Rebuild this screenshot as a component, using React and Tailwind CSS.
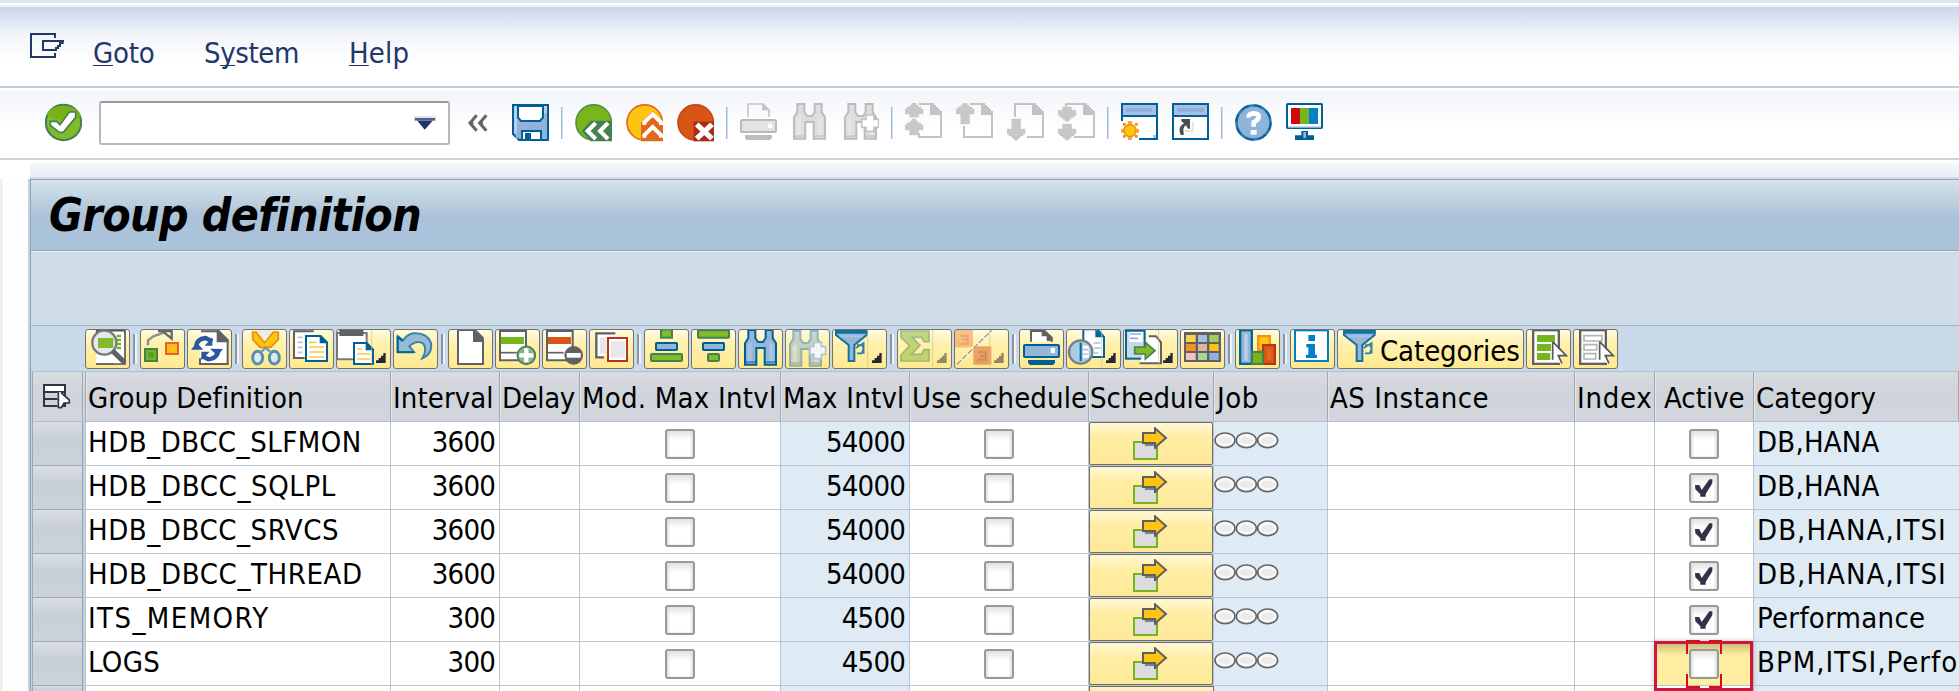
import React from "react";

const font = "font-['DejaVu_Sans_Condensed','DejaVu_Sans',sans-serif] [font-stretch:condensed]";

/* Icon artwork is drawn at three units per pixel. */
function Art({ x, y, w, h, children, className = "" }) {
  return (
    <svg
      className={`block shrink-0 ${className}`}
      width={w / 3}
      height={h / 3}
      viewBox={`${x} ${y} ${w} ${h}`}
      fill="none"
    >
      {children}
    </svg>
  );
}

function R({ x, y, w, h, f, s, sw = 6, ...rest }) {
  return s ? (
    <rect x={x + sw / 2} y={y + sw / 2} width={w - sw} height={h - sw} fill={f || "none"} stroke={s} strokeWidth={sw} {...rest} />
  ) : (
    <rect x={x} y={y} width={w} height={h} fill={f} {...rest} />
  );
}

/* ---------- main toolbar ---------- */

function Tool({ x, children }) {
  return (
    <Art x={x} y={69} w={111} h={117} className="mx-[7px]">
      {children}
    </Art>
  );
}

function Divider() {
  return <div className="mx-[5px] h-8 w-0.5 shrink-0 border-r border-[#cfdcec] bg-[#9dbcdc]" />;
}

function Binoculars({ x, y, fill, light, stroke }) {
  return (
    <g transform={`translate(${x} ${y})`}>
      <path d="M13 3H34V27L42 39H57L65 27V3H86V27L96 43V107H62V57H37V107H3V43L13 27Z" fill={fill} stroke={stroke} strokeWidth="6" />
      <path d="M14 48V98M20 40V98M79 40V98M85 48V98" stroke={light} strokeWidth="6" />
      <path d="M3 99H37M62 99H96" stroke={stroke} strokeWidth="3" />
    </g>
  );
}

function Page({ x, cut }) {
  return (
    <g>
      <path d={cut} stroke="#c3c3c3" strokeWidth="6" />
      <path d={`M${x + 75} 69H${x + 87}V75H${x + 93}V81H${x + 99}V87H${x + 105}V93H${x + 111}V105H${x + 75}Z`} fill="#c3c3c3" />
    </g>
  );
}

/* Block arrow pointing up, 54 units wide, stem running down to `h`. */
function Arrow({ x, y, h, down }) {
  const d = `M21 0H33V6H39V12H48V18H54V33H41V${h}H14V33H0V18H6V12H15V6H21Z`;
  return (
    <path
      d={d}
      fill="#c8c8c8"
      stroke="#bfbfbf"
      strokeWidth="1"
      transform={down ? `translate(${x} ${y + h}) scale(1 -1)` : `translate(${x} ${y})`}
    />
  );
}

function MainToolbar() {
  return (
    <div className="flex items-center pl-[38px]">
      <Art x={135} y={309} w={111} h={117} className="mx-[7px]">
        <circle cx="190.500" cy="367.500" r="53" fill="#80bb2a" stroke="#438052" strokeWidth="6" />
        <path d="M140 345Q190 375 242 350Q240 322 190 317Q150 318 140 345Z" fill="#76b219" />
        <path d="M151 364H170L180 374L208 336H227V352L190 397H178L151 376Z" fill="#fff" stroke="#438052" strokeWidth="5" />
      </Art>
      <div className="mt-[10px] ml-[10px] flex h-11 w-[351px] items-center justify-end self-start rounded-[3px] border-2 border-[#b5b7ba] border-t-[#96989d] bg-white pr-3">
        <Art x={1242} y={345} w={66} h={42}>
          <path d="M1242 345H1308V351H1242Z" fill="#e3e4e8" />
          <path d="M1244 351H1306V359H1244Z" fill="#50658e" />
          <path d="M1252 359H1298L1274 386Z" fill="#203569" />
        </Art>
      </div>
      <Art x={85} y={102} w={63} h={54} className="mr-4 ml-[18px]">
        <path d="M111 106L91 129L111 152M140 106L120 129L140 152" stroke="#666" strokeWidth="9" />
        <path d="M88 129H101M117 129H130" stroke="#666" strokeWidth="7" />
      </Art>
      <Tool x={216}>
        <path d="M219 75H324V180H237L219 162Z" fill="#94b2d9" stroke="#005f96" strokeWidth="6" />
        <path d="M222 78H231V160H222ZM312 78H321V100H312Z" fill="#bdd0e8" />
        <path d="M234 78H309V112L300 123H243L234 112Z" fill="#fff" stroke="#005f96" strokeWidth="6" />
        <R x={243} y={150} w={63} h={33} f="#fff" s="#005f96" />
        <R x={255} y={159} w={18} h={24} f="#005f96" />
        <path d="M230 177V165" stroke="#9dbce0" strokeWidth="5" />
      </Tool>
      <Divider />
      <Tool x={405}>
        <circle cx="461" cy="127.500" r="53" fill="#79b51d" stroke="#568f45" strokeWidth="5" />
        <path d="M425 153L452 122H516V184H452Z" fill="#438052" />
        <path d="M467 129L443 153L467 177M504 129L480 153L504 177" stroke="#fff" strokeWidth="12" />
      </Tool>
      <Tool x={558}>
        <circle cx="614" cy="127.500" r="53" fill="#fdc412" stroke="#e2691c" strokeWidth="5" />
        <path d="M603 128L638 93L669 128V184H603Z" fill="#e2691c" />
        <path d="M613 135V127L638 103L663 127V135M613 173V165L638 141L663 165V173" stroke="#fff" strokeWidth="12" />
      </Tool>
      <Tool x={711}>
        <circle cx="767" cy="127.500" r="53" fill="#d85615" stroke="#c64419" strokeWidth="5" />
        <path d="M761 125H822V184H761Z" fill="#aa2c14" />
        <path d="M770 133L816 176M816 133L770 176" stroke="#fff" strokeWidth="16" />
      </Tool>
      <Divider />
      <Tool x={900}>
        <path d="M924 110V72H969L987 90V110" stroke="#c3c3c3" strokeWidth="5" />
        <path d="M966 69L988 91H966Z" fill="#c3c3c3" />
        <R x={900} y={117} w={111} h={42} f="#e3e3e3" s="#b9b9b9" rx="3" />
        <R x={984} y={132} w={12} h={12} f="#fff" />
        <path d="M915 165H996V174L990 180H920L915 174Z" fill="#bdbdbd" />
      </Tool>
      <Tool x={1053}>
        <Binoculars x={1059} y={69} fill="#dedede" light="#e6e6e6" stroke="#bcbcbc" />
      </Tool>
      <Tool x={1206}>
        <Binoculars x={1212} y={69} fill="#dedede" light="#e6e6e6" stroke="#bcbcbc" />
        <path d="M1278 105H1302V118H1316V142H1302V154H1278V142H1265V118H1278Z" fill="#fff" stroke="#c2c2c2" strokeWidth="5" />
      </Tool>
      <Divider />
      <Tool x={75}>
        <Page x={75} cut="M117 72H153M183 96V171H117V160" />
        <Arrow x={75} y={69} h={43} />
        <Arrow x={75} y={117} h={48} />
      </Tool>
      <Tool x={228}>
        <Page x={228} cut="M270 72H306M336 96V171H252V138" />
        <Arrow x={228} y={69} h={63} />
      </Tool>
      <Tool x={381}>
        <Page x={381} cut="M405 111V72H459M489 96V171H441" />
        <Arrow x={381} y={117} h={63} down />
      </Tool>
      <Tool x={534}>
        <Page x={534} cut="M558 81V72H612M642 96V171H582" />
        <Arrow x={534} y={81} h={43} down />
        <Arrow x={534} y={132} h={48} down />
      </Tool>
      <Divider />
      <Tool x={723}>
        <path d="M726 123V72H831V177H777" fill="#fff" stroke="#005f96" strokeWidth="6" />
        <path d="M723 123H777V180H723Z" fill="#fff" />
        <R x={729} y={75} w={99} h={30} f="#a5c0e2" />
        <R x={738} y={84} w={78} h={12} f="#8fb1d9" />
        <R x={726} y={105} w={105} h={6} f="#005f96" />
        <path d="M819 174V165H828V174Z" fill="#a5c0e2" />
        <path d="M744 123H756V180H744ZM723 146H777V158H723Z" fill="#f7a54a" />
        <path d="M729 129h8v8h-8zM765 129h8v8h-8zM729 165h8v8h-8zM765 165h8v8h-8z" fill="#ef8a0c" />
        <circle cx="750" cy="152" r="18" fill="#fdc412" stroke="#f29410" strokeWidth="5" />
      </Tool>
      <Tool x={876}>
        <R x={876} y={69} w={111} h={111} f="#fff" s="#005f96" />
        <R x={882} y={75} w={99} h={30} f="#a5c0e2" />
        <R x={891} y={84} w={81} h={12} f="#8fb1d9" />
        <R x={879} y={105} w={105} h={6} f="#005f96" />
        <path d="M938 125V153H914" stroke="#e4e4e4" strokeWidth="6" />
        <path d="M904 117H930V146H924L918 136Q907 143 911 158V165H902Q891 143 912 130L904 124Z" fill="#4c4c50" />
      </Tool>
      <Divider />
      <Tool x={1065}>
        <circle cx="1120.500" cy="127.500" r="51" fill="#8fb4d9" stroke="#2e7cab" strokeWidth="8" />
        <circle cx="1120.500" cy="127.500" r="52" stroke="#005f96" strokeWidth="5" strokeDasharray="24 17" />
        <path d="M1106 113Q1104 101 1121 100Q1138 100 1136 112Q1134 121 1121 127V140" stroke="#fff" strokeWidth="14" />
        <R x={1112} y={150} w={18} h={14} f="#fff" />
      </Tool>
      <Tool x={1218}>
        <R x={1218} y={69} w={111} h={78} f="#fff" s="#005f96" rx="2" />
        <R x={1224} y={138} w={99} h={5} f="#c8d8e8" />
        <R x={1233} y={84} w={27} h={48} f="#cf0a0a" />
        <R x={1260} y={84} w={27} h={48} f="#76b51d" />
        <R x={1287} y={84} w={27} h={48} f="#0080c6" />
        <path d="M1264 153H1284V166H1302V180H1245V166H1264Z" fill="#005f96" />
        <R x={1270} y={156} w={8} h={18} f="#8fb4d9" />
      </Tool>
    </div>
  );
}

/* ---------- grid toolbar ---------- */

const btn =
  "flex h-10 shrink-0 items-center rounded-[3px] border border-[#73726b] bg-linear-to-b from-[#fffbe0] via-[#fff1ae] via-35% to-[#ffe98f]";

function Btn({ x, y = 42, menu, faded, children }) {
  const w = menu ? 165 : 135;
  return (
    <button className={btn}>
      <Art x={x + 3} y={y + 3} w={w - 6} h={114}>
        <g opacity={faded ? 0.5 : 1}>
          {children}
          {menu && <path d={`M${x + 149} ${y + 72}V${y + 102}H${x + 120}V${y + 94}H${x + 128}V${y + 87}H${x + 135}V${y + 80}H${x + 142}V${y + 72}Z`} fill="#26263a" />}
        </g>
        {menu && <path d={`M${x + 107} ${y + 3}V${y + 114}`} stroke="#cfc28b" strokeWidth="2" />}
      </Art>
    </button>
  );
}

function Bar() {
  return <div className="mx-px mt-[5px] h-[30px] w-1 shrink-0 border-x-2 border-l-[#8d959d] border-r-[#eef3f8]" />;
}

function Funnel({ x }) {
  return (
    <g transform={`translate(${x} 0)`}>
      <path d="M3 48H95V60L58 90V138H41V90L3 60Z" fill="#94b6d9" stroke="#14709f" strokeWidth="6" />
      <path d="M0 46H98V56H0Z" fill="#14709f" />
      <path d="M14 64H84" stroke="#a9c4e2" strokeWidth="6" />
      <path d="M62 99L86 84V116M66 90H80L86 100L80 115H66" stroke="#2e80ae" strokeWidth="5" />
    </g>
  );
}

function Cursor({ x, y }) {
  return (
    <g>
      <path d={`M${x} ${y}L${x + 42} ${y + 43}H${x + 24}L${x + 32} ${y + 63}H${x + 20}L${x + 12} ${y + 48}L${x} ${y + 60}Z`} fill="#fff" />
      <path d={`M${x + 4} ${y}V${y + 54}M${x + 4} ${y}L${x + 45} ${y + 42}H${x + 21}L${x + 32} ${y + 65}`} stroke="#55565a" strokeWidth="5" />
    </g>
  );
}

function Sheet({ x, y, w, h }) {
  return (
    <g>
      <path d={`M${x + 3} ${y + 3}H${x + w - 22}L${x + w - 3} ${y + 22}V${y + h - 3}H${x + 3}Z`} fill="#fff" stroke="#005f96" strokeWidth="6" />
      <path d={`M${x + w - 25} ${y}L${x + w} ${y + 25}H${x + w - 25}Z`} fill="#005f96" />
    </g>
  );
}

function GridToolbar() {
  return (
    <div className="flex h-[46px] shrink-0 items-start gap-0.5 border-b border-[#aebfce] bg-[#c9d9e9] pt-[3px] pl-[54px]">
      <Btn x={255} y={57}>
        <path d="M290 120V62H375V162H290" fill="#fff" stroke="#55565a" strokeWidth="5" />
        <path d="M350 78H363M350 90H363M350 102H363M350 114H363" stroke="#76b51d" strokeWidth="7" />
        <R x={288} y={145} w={54} h={18} f="#fff" />
        <path d="M288 162H342" stroke="#55565a" strokeWidth="5" />
        <circle cx="313" cy="98" r="36" fill="#e3e8ec" stroke="#77797d" strokeWidth="7" />
        <R x={294} y={84} w={46} h={30} f="#80bb2a" />
        <path d="M337 122L374 158" stroke="#606164" strokeWidth="15" />
      </Btn>
      <Bar />
      <Btn x={420} y={57}>
        <path d="M444 106V91L460 79L477 73L494 66" stroke="#8b8c90" strokeWidth="7" />
        <path d="M474 63H515V86L488 64" stroke="#66676b" strokeWidth="7" />
        <R x={432} y={114} w={42} h={42} f="#76b51d" s="#438052" />
        <R x={445} y={127} w={16} h={16} f="#559e20" />
        <R x={495} y={96} w={42} h={39} f="#f9b233" s="#e2691c" />
        <R x={507} y={108} w={18} h={16} f="#fdc412" />
      </Btn>
      <Btn x={561} y={57}>
        <path d="M603 64H654L683 92V162H600V145" fill="#fff" stroke="#606164" strokeWidth="6" />
        <path d="M650 61H658L685 88V97H650Z" fill="#606164" />
        <path d="M588 110Q590 87 617 84L637 94M655 124Q650 146 625 148L606 138" stroke="#2b579d" strokeWidth="13" />
        <path d="M573 119L590 98L610 119ZM630 116L669 117L652 137ZM637 82V107H614ZM604 125H629L604 151Z" fill="#2b579d" />
      </Btn>
      <Bar />
      <Btn x={726} y={57}>
        <path d="M758 66H769L793 98L820 66H835V88L812 112H780L758 88Z" fill="#fdc412" stroke="#ef8a0c" strokeWidth="5" />
        <path d="M773 60H817L797 92H792Z" fill="#ececea" />
        <ellipse cx="773" cy="143" rx="15" ry="19" fill="#dfe9ee" stroke="#5590b2" strokeWidth="9" />
        <ellipse cx="823" cy="143" rx="15" ry="19" fill="#dfe9ee" stroke="#5590b2" strokeWidth="9" />
        <path d="M785 125L796 113L810 125" stroke="#6b9bb8" strokeWidth="7" />
      </Btn>
      <Btn x={867} y={57}>
        <path d="M941 64H882V144H914" fill="#fff" stroke="#606164" strokeWidth="6" />
        <path d="M893 82H908M893 97H908M893 112H908M893 127H908" stroke="#c4c4c4" strokeWidth="5" />
        <Sheet x={915} y={75} w={69} h={81} />
        <path d="M927 97H950M927 111H973M927 126H973M927 141H973" stroke="#fcc93f" strokeWidth="5" />
      </Btn>
      <Btn x={1008} y={57} menu>
        <path d="M1011 69H1100V148H1011Z" fill="#fff" stroke="#77797d" strokeWidth="6" />
        <path d="M1018 60H1090V78H1018Z" fill="#606164" />
        <Sheet x={1059} y={96} w={63} h={69} />
        <path d="M1071 117H1087M1071 132H1111M1071 147H1111" stroke="#fcc93f" strokeWidth="5" />
      </Btn>
      <Btn x={1179} y={57}>
        <path d="M1193 78V126H1242L1228 109Q1250 88 1270 101Q1283 119 1267 145Q1298 132 1293 98Q1280 67 1240 70Q1220 74 1210 91Z" fill="#98bbd4" stroke="#3c83b0" strokeWidth="6" />
        <path d="M1193 78V127H1243M1193 80L1208 94" stroke="#00679c" strokeWidth="6" />
      </Btn>
      <Bar />
      <Btn x={54}>
        <path d="M84 45H132L159 73V147H84Z" fill="#fff" stroke="#606164" strokeWidth="6" />
        <path d="M129 43H137L161 67V81H129Z" fill="#606164" />
      </Btn>
      <Btn x={195}>
        <path d="M210 48H288V136H210Z" fill="#fff" stroke="#606164" strokeWidth="6" />
        <R x={212} y={66} w={70} h={21} f="#76b51d" />
        <path d="M210 113H260" stroke="#606164" strokeWidth="5" />
        <circle cx="289" cy="121" r="27" fill="#8bb096" stroke="#438052" strokeWidth="5" />
        <path d="M289 100V142M268 121H310" stroke="#fff" strokeWidth="13" />
      </Btn>
      <Btn x={336}>
        <path d="M351 48H428V136H351Z" fill="#fff" stroke="#606164" strokeWidth="6" />
        <R x={354} y={66} w={69} h={21} f="#d85615" />
        <path d="M351 113H401" stroke="#606164" strokeWidth="5" />
        <circle cx="431" cy="121" r="28" fill="#606164" />
        <R x={410} y={114} w={42} h={14} f="#fff" />
      </Btn>
      <Btn x={477}>
        <path d="M556 55H499V127H522" fill="#fff" stroke="#606164" strokeWidth="7" />
        <R x={509} y={67} w={21} h={49} f="#e6e6e6" />
        <R x={531} y={66} w={63} h={75} f="#fff" s="#b33520" />
        <R x={543} y={78} w={42} h={50} f="#e8e8ea" />
      </Btn>
      <Bar />
      <Btn x={642}>
        <R x={690} y={40} w={39} h={31} f="#80bb2a" s="#438052" />
        <R x={675} y={81} w={69} h={27} f="#94b6d9" s="#005f96" rx="2" />
        <R x={660} y={114} w={99} h={27} f="#80bb2a" s="#438052" rx="3" />
      </Btn>
      <Btn x={783}>
        <R x={801} y={43} w={99} h={28} f="#80bb2a" s="#438052" rx="2" />
        <R x={816} y={81} w={69} h={27} f="#94b6d9" s="#005f96" rx="2" />
        <R x={831} y={114} w={39} h={27} f="#80bb2a" s="#438052" rx="3" />
      </Btn>
      <Btn x={924}>
        <Binoculars x={942} y={42} fill="#94b6d9" light="#a9c4e2" stroke="#005f96" />
      </Btn>
      <Btn x={1065}>
        <g opacity="0.55">
          <Binoculars x={1077} y={45} fill="#94b6d9" light="#bdd3e8" stroke="#3680ab" />
        </g>
        <path d="M1152 82H1174V95H1187V118H1174V131H1152V118H1140V95H1152Z" fill="#f4f6fa" stroke="#b5c3d6" strokeWidth="5" />
      </Btn>
      <Btn x={1206} menu>
        <Funnel x={1215} />
      </Btn>
      <Bar />
      <Btn x={51} menu faded>
        <path d="M63 48H147V80H132L124 67H96L120 91L94 118H124L132 104H147V138H63V120L89 92L63 67Z" fill="#84b93c" stroke="#438052" strokeWidth="5" />
      </Btn>
      <Btn x={222} menu faded>
        <R x={225} y={45} w={54} h={52} f="#f5893a" />
        <path d="M241 63H263V86H238M247 73H262" stroke="#d8552a" strokeWidth="6" />
        <path d="M231 148L335 46" stroke="#fff" strokeWidth="12" />
        <path d="M231 148L335 46" stroke="#606164" strokeWidth="5" strokeDasharray="18 5" />
        <R x={280} y={94} w={54} h={55} f="#d75722" />
        <path d="M295 112H317V134H292M300 123H317" stroke="#a9281c" strokeWidth="6" />
      </Btn>
      <Bar />
      <Btn x={417}>
        <path d="M453 80V48H494L515 68V80" fill="#fff" stroke="#606164" strokeWidth="6" />
        <path d="M485 45L517 67V78H500V64H485Z" fill="#606164" />
        <R x={429} y={87} w={111} h={42} f="#94b6d9" s="#005f96" rx="3" />
        <R x={512} y={99} w={13} h={15} f="#fff" />
        <path d="M444 135H525V144L519 150H450L444 144Z" fill="#005f96" />
      </Btn>
      <Btn x={558} menu>
        <path d="M610 43H652L672 66V126H610Z" fill="#fff" stroke="#00679c" strokeWidth="6" />
        <path d="M646 43L674 67H646Z" fill="#00679c" />
        <path d="M641 84H662M641 99H662M641 114H655" stroke="#a9c4e2" strokeWidth="5" />
        <circle cx="602" cy="111" r="35" fill="#a9cce5" stroke="#7b7d82" strokeWidth="7" />
        <path d="M602 83V138" stroke="#00679c" strokeWidth="6" />
        <path d="M609 92H626V129H609Z" fill="#fff" />
        <path d="M609 104H624M609 117H624" stroke="#a9c4e2" strokeWidth="5" />
      </Btn>
      <Btn x={729} menu>
        <R x={735} y={44} w={62} h={90} f="#c8daec" s="#00679c" />
        <R x={748} y={51} w={40} h={30} f="#fff" />
        <path d="M750 57H783M750 70H775" stroke="#8fb1d9" strokeWidth="5" />
        <path d="M806 64H828L843 82V145H779" fill="#fff" stroke="#606164" strokeWidth="6" />
        <R x={800} y={70} w={30} h={70} f="#fff" />
        <path d="M764 96H796V82L825 107L796 132V117H764Z" fill="#80bb2a" stroke="#438052" strokeWidth="5" />
      </Btn>
      <Btn x={900}>
        <R x={912} y={51} w={111} h={90} f="#606164" />
        <R x={918} y={60} w={29} h={21} f="#fcd351" /><R x={954} y={60} w={27} h={21} f="#a3bfdc" /><R x={988} y={60} w={28} h={21} f="#a2cc5e" />
        <R x={918} y={87} w={29} h={21} f="#f7921c" /><R x={954} y={87} w={27} h={21} f="#d9b3a3" /><R x={988} y={87} w={28} h={21} f="#fdc412" />
        <R x={918} y={114} w={29} h={21} f="#f8c0c0" /><R x={954} y={114} w={27} h={21} f="#a9d696" /><R x={988} y={114} w={28} h={21} f="#8fb4d9" />
      </Btn>
      <Bar />
      <Btn x={1065}>
        <R x={1077} y={42} w={42} h={108} f="#94b6d9" s="#00679c" sw={7} />
        <R x={1093} y={57} w={10} h={80} f="#bdd0e8" />
        <R x={1131} y={60} w={42} h={50} f="#fdc412" s="#f29410" sw={7} />
        <R x={1146} y={87} w={42} h={63} f="#d85615" s="#b33520" />
        <R x={1161} y={102} w={13} h={34} f="#e2691c" />
        <R x={1113} y={108} w={39} h={42} f="#76b51d" s="#438052" />
      </Btn>
      <Bar />
      <Btn x={210}>
        <R x={222} y={43} w={105} h={98} f="#fff" s="#0080c6" />
        <path d="M265 60H285V78H265ZM259 87H285V119H291V129H258V119H265V97H259Z" fill="#0080c6" />
      </Btn>
      <button className={`${btn} w-[187px]`}>
        <Art x={354} y={45} w={126} h={114}>
          <Funnel x={369} />
        </Art>
        <span className="mt-1 text-[29px] tracking-[-0.1px] text-black">Categories</span>
      </button>
      <Btn x={918}>
        <R x={936} y={42} w={84} h={108} f="#fff" s="#606164" sw={7} />
        <R x={951} y={60} w={54} h={21} f="#76b51d" /><R x={951} y={87} w={42} h={21} f="#76b51d" /><R x={951} y={114} w={40} h={21} f="#76b51d" />
        <Cursor x={994} y={80} />
      </Btn>
      <Btn x={1059}>
        <R x={1077} y={42} w={84} h={108} f="#fff" s="#606164" sw={7} />
        <path d="M1092 62H1146V78H1092ZM1092 89H1130V105H1092ZM1092 116H1127V132H1092Z" stroke="#b4b4b4" strokeWidth="5" />
        <Cursor x={1135} y={80} />
      </Btn>
    </div>
  );
}

/* ---------- table ---------- */

const cols =
  "grid grid-cols-[53px_306px_109px_80px_201px_129px_179px_125px_114px_247px_80px_99px_205px]";

const rows = [
  { name: "HDB_DBCC_SLFMON", nameCls: "tracking-[0.5px]", interval: "3600", max: "54000", active: false, cat: "DB,HANA", catCls: "tracking-[0.2px]" },
  { name: "HDB_DBCC_SQLPL", nameCls: "tracking-[0.6px]", interval: "3600", max: "54000", active: true, cat: "DB,HANA", catCls: "tracking-[0.2px]" },
  { name: "HDB_DBCC_SRVCS", nameCls: "tracking-[0.55px]", interval: "3600", max: "54000", active: true, cat: "DB,HANA,ITSI", catCls: "tracking-[1.05px]" },
  { name: "HDB_DBCC_THREAD", nameCls: "tracking-[0.6px]", interval: "3600", max: "54000", active: true, cat: "DB,HANA,ITSI", catCls: "tracking-[1.05px]" },
  { name: "ITS_MEMORY", nameCls: "tracking-[1.4px]", interval: "300", max: "4500", active: true, cat: "Performance", catCls: "tracking-[0.3px]" },
  { name: "LOGS", nameCls: "tracking-[0.3px]", interval: "300", max: "4500", active: false, cat: "BPM,ITSI,Perfo", catCls: "tracking-[1px]" },
];

const heads = [
  ["Group Definition", "pl-[2px] tracking-[0.1px]"],
  ["Interval", "pl-[2px] tracking-[0.1px]"],
  ["Delay", "pl-[2px] tracking-[-0.4px]"],
  ["Mod. Max Intvl", "pl-[2px] tracking-[0.25px]"],
  ["Max Intvl", "pl-[2px] tracking-[0.25px]"],
  ["Use schedule", "pl-[2px] tracking-[0.1px]"],
  ["Schedule", "pl-px tracking-[0px]"],
  ["Job", "pl-[3px] tracking-[0.5px]"],
  ["AS Instance", "pl-[2px] tracking-[0.5px]"],
  ["Index", "pl-[2px] tracking-[0.7px]"],
  ["Active", "pl-[9px] tracking-[0px]"],
  ["Category", "pl-[2px] tracking-[0.1px]"],
];

const cell = "flex h-full items-center border-r border-[#b9c5d3] overflow-hidden whitespace-nowrap";

function Check({ on, className = "" }) {
  return (
    <div className={`flex size-[30px] shrink-0 items-center justify-center rounded-[3px] border-2 border-[#97999b] bg-linear-to-b from-[#e2e2e4] via-white via-35% to-white shadow-[inset_2px_0_2px_#e2e2e4,inset_-2px_0_2px_#e2e2e4] ${className}`}>
      {on && (
        <Art x={405} y={324} w={54} h={60}>
          <path d="M405 345H418L425 360L448 328H457V340L437 372V380H421V373L406 358Z" fill="#32324a" />
        </Art>
      )}
    </div>
  );
}

function ScheduleIcon() {
  return (
    <Art x={759} y={336} w={105} h={99} className="-ml-[1px]">
      <R x={759} y={378} w={75} h={57} f="#dcdcde" s="#76b51d" />
      <path d="M795 378H834V402H822V393H795Z" fill="#7a828a" />
      <path d="M789 354H825V340L858 369L825 397V384H789Z" fill="#fdc412" stroke="#5e5f63" strokeWidth="6" />
    </Art>
  );
}

function Chain() {
  return (
    <Art x={1002} y={350} w={195} h={50}>
      {[1035, 1099, 1163].map((cx) => (
        <g key={cx}>
          <ellipse cx={cx} cy="375" rx="30" ry="22" fill="#f8f8f8" stroke="#66676b" strokeWidth="5" />
          <ellipse cx={cx} cy="375" rx="20" ry="11" fill="#ebebeb" />
        </g>
      ))}
    </Art>
  );
}

function RowHandle({ className = "" }) {
  return (
    <div className={`mr-[2px] h-full border border-t-0 border-[#9ba9b7] border-r-[#93a2b1] bg-linear-to-b from-[#dadfe5] via-[#c9cfd7] via-40% to-[#ccd2da] ${className}`} />
  );
}

function ScheduleCell() {
  return (
    <div className="flex h-full items-stretch border-r border-[#b9c5d3] bg-[#b9c5d3]">
      <div className="flex flex-1 items-center justify-center rounded-[2px] border border-[#6f6e66] bg-linear-to-b from-[#fff8d5] via-[#ffeda3] via-35% to-[#ffe99a]">
        <ScheduleIcon />
      </div>
    </div>
  );
}

function Row({ r, focus }) {
  return (
    <div className={`${cols} h-11 border-b border-[#b9c5d3]`}>
      <div className="-mb-px"><RowHandle className="border-b" /></div>
      <div className={`${cell} border-l bg-white pl-[2px]`}>
        <span className={`-mt-[3px] ${r.nameCls}`}>{r.name}</span>
      </div>
      <div className={`${cell} justify-end bg-white pr-[4px]`}><span className="-mt-[3px] tracking-[-0.8px]">{r.interval}</span></div>
      <div className={`${cell} bg-white`} />
      <div className={`${cell} justify-center bg-white`}><Check /></div>
      <div className={`${cell} justify-end bg-[#deeaf4] pr-[4px]`}><span className="-mt-[3px] tracking-[-0.8px]">{r.max}</span></div>
      <div className={`${cell} justify-center bg-white`}><Check /></div>
      <ScheduleCell />
      <div className={`${cell} items-start bg-[#deeaf4] pt-[10px]`}><Chain /></div>
      <div className={`${cell} bg-white`} />
      <div className={`${cell} bg-white`} />
      {focus ? (
        <div className="relative flex h-full items-center justify-center border-r border-[#b9c5d3] bg-linear-to-b from-[#c3b777] to-[#ffee9f] to-30%">
          <div className="absolute -top-px -left-px h-[50px] w-[99px] border-[3px] border-[#d2143a] shadow-[0_0_5px_#88888880]" />
          <Check />
          <svg className="absolute -top-[2px] left-[31px]" width="37" height="49" viewBox="0 0 37 49" fill="none" stroke="#d90d18" strokeWidth="2">
            <path d="M14 1H1V14M23 1H35V14M1 34V47H14M35 34V47H23" />
          </svg>
        </div>
      ) : (
        <div className={`${cell} justify-center bg-white`}><Check on={r.active} /></div>
      )}
      <div className="flex h-full items-center overflow-hidden bg-[#deeaf4] pl-[3px] whitespace-nowrap">
        <span className={`-mt-[3px] ${r.catCls}`}>{r.cat}</span>
      </div>
    </div>
  );
}

function Table() {
  return (
    <div className="w-full overflow-hidden pl-px">
      <div className={`${cols} h-[50px] border-b border-[#b3bfcc] bg-linear-to-b from-[#d9dde2] via-[#cfd3da] via-45% to-[#d2d6dc]`}>
        <div className="mr-[2px] flex items-center border-x border-[#9ba9b7] pl-[10px]">
          <Art x={129} y={222} w={84} h={75}>
            <R x={129} y={222} w={69} h={69} f="#cfd3da" s="#32324a" />
            <path d="M135 228H192V243H135Z" fill="#fff" />
            <path d="M129 246H198M129 267H175" stroke="#32324a" strokeWidth="6" />
            <path d="M173 246H181L212 273L196 277L180 296H173Z" fill="#fff" />
            <path d="M175 246V293H184L192 279H208V270L183 248" stroke="#32324a" strokeWidth="5" />
          </Art>
        </div>
        {heads.map(([label, cls], i) => (
          <div key={label} className={`flex items-center border-r border-[#9ba9b7] whitespace-nowrap shadow-[inset_1px_0_#e3e6ea] ${cls} ${i === 0 ? "border-l" : ""}`}>
            <span className="mt-[3px]">{label}</span>
          </div>
        ))}
      </div>
      {rows.map((r, i) => (
        <Row key={r.name} r={r} focus={i === rows.length - 1} />
      ))}
      <div className={`${cols} h-2`}>
        <div><RowHandle /></div>
        <div className={`${cell} border-l bg-white`} />
        <div className={`${cell} bg-white`} />
        <div className={`${cell} bg-white`} />
        <div className={`${cell} bg-white`} />
        <div className={`${cell} bg-[#deeaf4]`} />
        <div className={`${cell} bg-white`} />
        <div className="border border-b-0 border-[#6f6e66] bg-[#fff3bd]" />
        <div className={`${cell} bg-[#deeaf4]`} />
        <div className={`${cell} bg-white`} />
        <div className={`${cell} bg-white`} />
        <div className={`${cell} bg-white`} />
        <div className="bg-[#deeaf4]" />
      </div>
    </div>
  );
}

export default function App() {
  return (
    <div className={`flex h-[691px] w-[1959px] flex-col overflow-hidden bg-white text-[29px] leading-none text-black ${font}`}>
      <div className="h-[3px] shrink-0 bg-[#dbe6f2]" />
      <div className="h-1 shrink-0 border-b-2 border-[#eef1f6] bg-white" />
      <nav className="flex h-[81px] shrink-0 border-b-2 border-[#c2cdda] bg-linear-to-b from-[#c9d5e9] via-[#f2f5f9] via-35% to-white to-70% text-[#24366a]">
        <Art x={90} y={99} w={105} h={75} className="mt-[26px] ml-[30px]">
          <path d="M165 114V102H93V171H165V159M192 123H129V150H168V144H174V138H180V129H188V123" stroke="#24366a" strokeWidth="6" />
        </Art>
        <div className="flex pt-8">
          <span className="ml-[28px] w-[111px] tracking-[-0.2px]"><u className="decoration-1 underline-offset-2">G</u>oto</span>
          <span className="w-[145px] tracking-[-0.4px]">S<u className="decoration-1 underline-offset-2 [text-decoration-skip-ink:none]">y</u>stem</span>
          <span className="tracking-[0.2px]"><u className="decoration-1 underline-offset-2">H</u>elp</span>
        </div>
      </nav>
      <div className="h-[3px] shrink-0 bg-white" />
      <div className="flex h-[69px] shrink-0 border-b-2 border-[#cdd2de] bg-linear-to-b from-[#f2f5f9] to-white to-60% pb-1">
        <MainToolbar />
      </div>
      <div className="h-[3px] shrink-0 bg-white" />
      <div className="ml-[30px] h-4 shrink-0 border-b-2 border-[#d3d9e2] bg-linear-to-b from-[#f4f6fa] to-[#e9eef7]" />
      <div className="flex min-h-0 flex-1">
        <div className="w-[30px] shrink-0 border-r-2 border-[#c5d1e0] bg-linear-to-r from-[#f0f0f0] from-10% via-white via-12% to-[#fbfcfe]" />
        <main className="flex min-w-0 flex-1 flex-col border-l border-[#8fa5ba] bg-[#c3d0dd]">
          <h1 className="flex h-[72px] shrink-0 items-center border-y border-[#8fa5ba] bg-linear-to-b from-[#d4e4ef] via-[#b9cddd] via-35% to-[#abc3da] to-50% pl-[18px] text-[46px] font-bold tracking-[-0.6px] italic">
            Group definition
          </h1>
          <div className="h-[75px] shrink-0 border-t border-b border-t-[#e6eff5] border-b-[#a4b5c4] bg-[#cfdde8]" />
          <GridToolbar />
          <Table />
        </main>
      </div>
    </div>
  );
}
